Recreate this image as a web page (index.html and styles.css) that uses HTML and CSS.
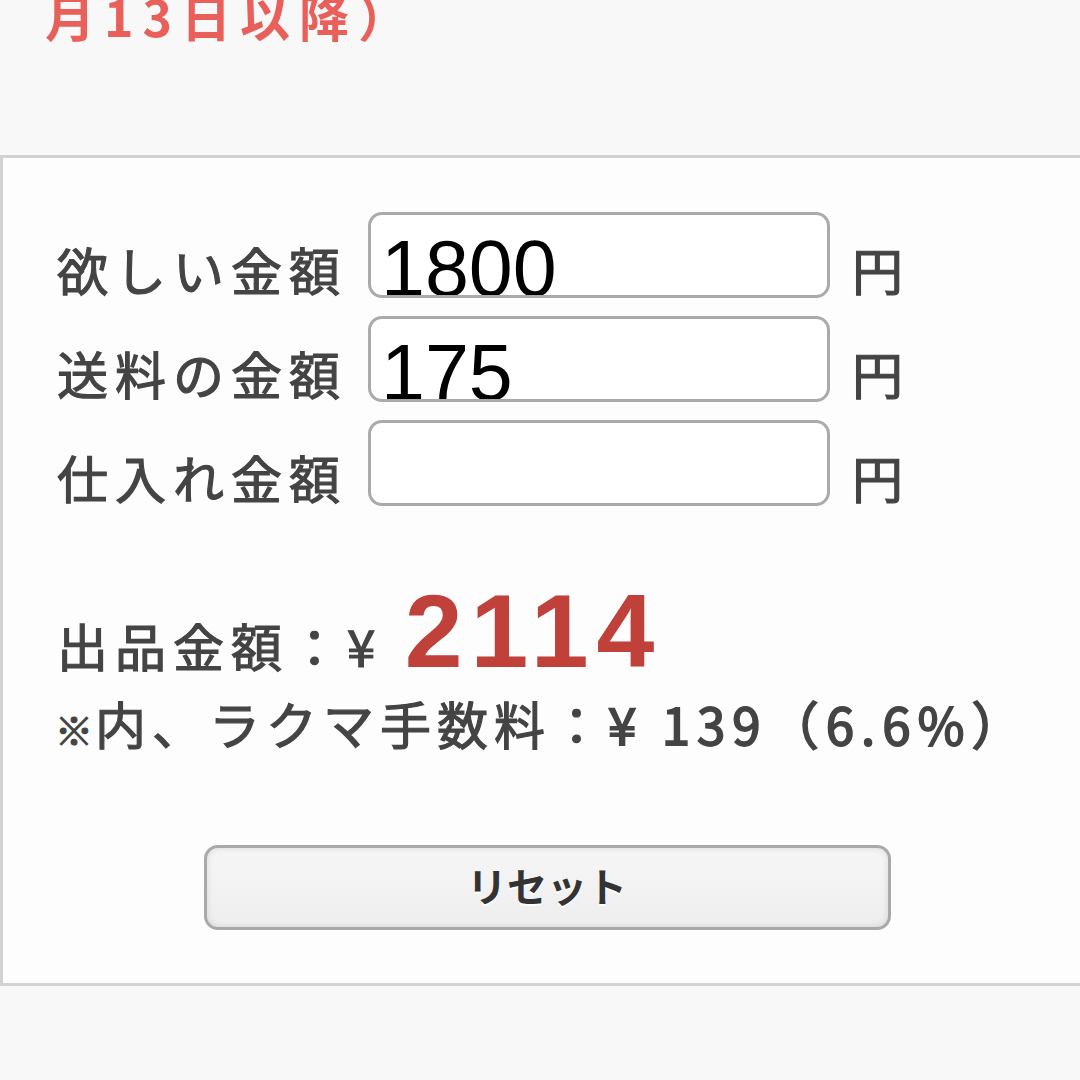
FILE: index.html
```html
<!DOCTYPE html>
<html lang="ja">

<head>
  <meta charset="utf-8">
  <title>ラクマ 出品金額計算</title>
  <link rel="stylesheet" href="styles.css">
</head>

<body>
  <p class="notice">月13日以降）</p>

  <div class="calc">
    <div class="fields">
      <label for="want">欲しい金額</label>
      <input id="want" type="text" value="1800">
      <span class="unit">円</span>

      <label for="ship">送料の金額</label>
      <input id="ship" type="text" value="175">
      <span class="unit">円</span>

      <label for="cost">仕入れ金額</label>
      <input id="cost" type="text" value="">
      <span class="unit">円</span>
    </div>

    <p class="result">出品金額：¥ <span class="price">2114</span></p>
    <p class="fee"><span class="mark">※</span>内、ラクマ手数料：<span class="num">¥ 139（6.6%）</span></p>

    <button class="reset" type="button">リセット</button>
  </div>
</body>

</html>
```

FILE: styles.css
```css
html,
body {
  margin: 0;
  padding: 0;
  overflow: hidden;
}

body {
  width: 1080px;
  height: 1080px;
  background-color: #f8f8f8;
  font-family: "Noto Sans CJK JP", sans-serif;
  color: #444;
}

.notice {
  margin: -10px 0 0 45px;
  font-size: 50px;
  line-height: 50px;
  font-weight: 700;
  letter-spacing: 9px;
  color: #e9605a;
  white-space: nowrap;
}

.calc {
  margin-top: 115px;
  width: 1094px;
  box-sizing: border-box;
  border: 3px solid #d2d2d2;
  background-color: #fdfdfd;
  padding: 54px 54px 53px;
}

.fields {
  display: grid;
  grid-template-columns: 311px 462px auto;
  row-gap: 18px;
  align-items: end;
}

.fields label {
  font-size: 51px;
  line-height: 51px;
  font-weight: 400;
  -webkit-text-stroke: 1.2px #444;
  letter-spacing: 7px;
  padding-bottom: 3px;
  white-space: nowrap;
}

.fields input {
  box-sizing: border-box;
  width: 462px;
  height: 86px;
  margin: 0;
  border: 3px solid #aaa;
  border-radius: 14px;
  padding: 27px 8px 0 10px;
  background-color: #fff;
  font-family: "Liberation Sans", Arial, sans-serif;
  font-size: 79px;
  color: #000;
  outline: none;
}

.unit {
  margin-left: 22px;
  font-size: 51px;
  line-height: 51px;
  font-weight: 400;
  -webkit-text-stroke: 1.2px #444;
  padding-bottom: 3px;
}

.result {
  margin: 73px 0 0;
  font-size: 51px;
  line-height: 104px;
  font-weight: 400;
  -webkit-text-stroke: 1.2px #444;
  letter-spacing: 7px;
  white-space: nowrap;
}

.price {
  margin-left: 4px;
  font-family: "Liberation Sans", Arial, sans-serif;
  font-size: 104px;
  font-weight: 700;
  letter-spacing: 8px;
  color: #c0403a;
  -webkit-text-stroke: 0;
}

.fee {
  margin: 3px 0 0 -2px;
  font-size: 51px;
  line-height: 46px;
  font-weight: 400;
  -webkit-text-stroke: 1.2px #444;
  letter-spacing: 6px;
  white-space: nowrap;
}

.fee .mark {
  font-size: 38px;
  font-weight: 700;
  letter-spacing: 2px;
}

.fee .num {
  letter-spacing: 7px;
  -webkit-text-stroke: 1.8px #444;
}

.reset {
  display: block;
  margin: 93px auto 0;
  width: 687px;
  height: 85px;
  border: 3px solid #a9a9a9;
  border-radius: 14px;
  padding: 0 0 6px;
  background: linear-gradient(#f6f6f6, #eeeeee);
  box-shadow: inset 0 0 7px rgba(0, 0, 0, 0.12);
  font-family: "Noto Sans CJK JP", sans-serif;
  font-size: 40px;
  font-weight: 700;
  color: #333;
  text-shadow: 0 2px 0 #fff;
  cursor: pointer;
}
```
